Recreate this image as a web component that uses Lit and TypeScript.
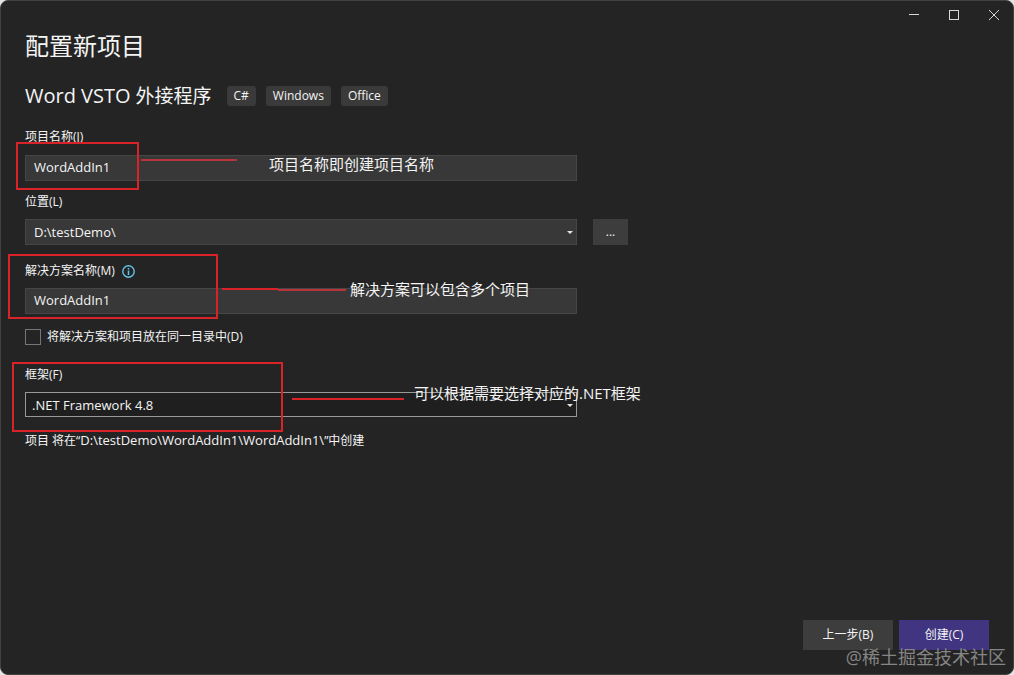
import { LitElement, html, css, svg } from "lit";
import { customElement, property, state } from "lit/decorators.js";

@customElement("window-controls")
class WindowControls extends LitElement {
  static styles = css`
    :host {
      display: flex;
      justify-content: flex-end;
      height: 28px;
    }
    .control {
      width: 40px;
      padding: 0;
      border: 0;
      background: none;
      color: #d8d8d8;
      display: grid;
      place-items: center;
    }
    .icon {
      display: block;
    }
  `;

  private icon(shape: unknown) {
    return html`<svg class="icon" width="12" height="12" viewBox="0 0 12 12" fill="none" stroke="currentColor" aria-hidden="true">${shape}</svg>`;
  }

  render() {
    return html`
      <button class="control" aria-label="最小化">${this.icon(svg`<path d="M2 5.5H12" />`)}</button>
      <button class="control" aria-label="最大化">${this.icon(svg`<rect x="2.5" y="1.5" width="9" height="9" />`)}</button>
      <button class="control" aria-label="关闭">${this.icon(svg`<path d="M2 1L12 11M12 1L2 11" />`)}</button>
    `;
  }
}

@customElement("callout-note")
class CalloutNote extends LitElement {
  @property() text = "";

  static styles = css`
    :host {
      position: absolute;
      pointer-events: none;
      color: #f4f4f4;
      font-size: 15px;
      line-height: 20px;
      white-space: nowrap;
    }
  `;

  render() {
    return html`${this.text}`;
  }
}

@customElement("app-root")
class AppRoot extends LitElement {
  @state() private projectName = "WordAddIn1";
  @state() private solutionName = "WordAddIn1";
  @state() private location = "D:\\testDemo\\";

  static styles = css`
    :host {
      display: block;
      background: #e4e4e4;
      font-family: "Open Sans", "Noto Sans CJK SC", sans-serif;
      font-size: 12px;
      line-height: 18px;
      color: #f4f4f4;
    }
    * {
      box-sizing: border-box;
    }
    .window {
      position: relative;
      min-height: 100vh;
      display: flex;
      flex-direction: column;
      background: #242424;
      border: 1px solid #414141;
      border-radius: 8px;
    }
    .content {
      flex: 1;
      padding: 0 24px;
    }
    .title {
      margin: 0;
      font-size: 24px;
      line-height: 34px;
      font-weight: 400;
    }
    .template {
      display: flex;
      align-items: center;
      margin-top: 18px;
      gap: 15px;
    }
    .subtitle {
      margin: 0;
      font-size: 19px;
      line-height: 30px;
      font-weight: 400;
    }
    .product {
      font-size: 20px;
    }
    .tags {
      display: flex;
      gap: 10px;
      margin: 0;
      padding: 0;
      list-style: none;
    }
    .tag {
      padding: 1px 7px;
      border-radius: 3px;
      background: #3a3a3a;
    }
    .form {
      margin-top: 17px;
      display: flex;
      flex-direction: column;
    }
    .label {
      display: flex;
      align-items: center;
      gap: 7px;
    }
    .group {
      display: flex;
      flex-direction: column;
      gap: 8px;
      margin-bottom: 14px;
    }
    .group.first {
      gap: 9px;
      margin-bottom: 12px;
    }
    .group.wide {
      margin-bottom: 17px;
    }
    .row {
      display: flex;
      gap: 16px;
    }
    .field {
      flex: 0 1 552px;
      position: relative;
    }
    .box {
      display: block;
      width: 100%;
      height: 26px;
      margin: 0;
      padding: 0 8px;
      border: 1px solid #464646;
      border-radius: 0;
      background: #383838;
      color: #f4f4f4;
      font: inherit;
      font-size: 13px;
      appearance: none;
      outline: none;
    }
    .box.text {
      padding-bottom: 2px;
    }
    .box.outlined {
      height: 25px;
      padding: 0 6px;
      border-color: #999;
      background: #1f1f1f;
    }
    .arrow {
      position: absolute;
      right: 4px;
      top: 12px;
      pointer-events: none;
    }
    .browse {
      width: 35px;
      height: 26px;
      padding: 0;
      border: 0;
      background: #3d3d3d;
      color: #f4f4f4;
      font: inherit;
    }
    .check {
      display: flex;
      align-items: center;
      gap: 6px;
      margin-bottom: 20px;
    }
    .tick {
      appearance: none;
      width: 16px;
      height: 16px;
      margin: 0;
      border: 1px solid #767676;
      background: #242424;
    }
    .tick:checked {
      background: #6a5acd;
    }
    .result {
      margin: 0;
    }
    .path {
      font-size: 13px;
    }
    .actions {
      display: flex;
      justify-content: flex-end;
      gap: 6px;
      padding: 0 24px 24px;
    }
    .action {
      width: 90px;
      height: 30px;
      padding: 0;
      border: 0;
      background: #3d3d3d;
      color: #f4f4f4;
      font: inherit;
    }
    .action.primary {
      background: #413480;
    }
    .marks {
      position: absolute;
      left: -1px;
      top: -1px;
      pointer-events: none;
    }
    .note-project {
      left: 268px;
      top: 153px;
    }
    .note-solution {
      left: 349px;
      top: 278px;
    }
    .note-framework {
      left: 413px;
      top: 382px;
    }
    .watermark {
      position: absolute;
      right: 7px;
      bottom: 4px;
      font-size: 18px;
      line-height: 26px;
      color: #858585;
      pointer-events: none;
    }
  `;

  private arrow() {
    return html`<svg class="arrow" width="6" height="3" viewBox="0 0 6 3" aria-hidden="true"><path d="M0 0H6L3 3Z" fill="#e4e4e4" /></svg>`;
  }

  render() {
    return html`
      <div class="window">
        <window-controls></window-controls>
        <main class="content">
          <h1 class="title">配置新项目</h1>
          <div class="template">
            <h2 class="subtitle"><span class="product">Word VSTO</span> 外接程序</h2>
            <ul class="tags">
              ${["C#", "Windows", "Office"].map((t) => html`<li class="tag">${t}</li>`)}
            </ul>
          </div>
          <form class="form" @submit=${(e: Event) => e.preventDefault()}>
            <div class="group first">
              <label class="label" for="project">项目名称(J)</label>
              <div class="row">
                <div class="field">
                  <input class="box text" id="project" .value=${this.projectName}
                    @input=${(e: Event) => (this.projectName = (e.target as HTMLInputElement).value)} />
                </div>
              </div>
            </div>
            <div class="group wide">
              <label class="label" for="location">位置(L)</label>
              <div class="row">
                <div class="field">
                  <select class="box" id="location"><option>${this.location}</option></select>
                  ${this.arrow()}
                </div>
                <button class="browse" type="button" aria-label="浏览">...</button>
              </div>
            </div>
            <div class="group">
              <label class="label" for="solution">解决方案名称(M)
                <svg width="13" height="13" viewBox="0 0 13 13" fill="none" stroke="#62c4e8" aria-hidden="true">
                  <circle cx="6.5" cy="6.5" r="5.7" stroke-width="1.4" />
                  <path d="M6.5 5.6V10M6.5 3V4.4" stroke-width="1.5" />
                </svg>
              </label>
              <div class="row">
                <div class="field">
                  <input class="box text" id="solution" .value=${this.solutionName}
                    @input=${(e: Event) => (this.solutionName = (e.target as HTMLInputElement).value)} />
                </div>
              </div>
            </div>
            <label class="check"><input class="tick" type="checkbox" />将解决方案和项目放在同一目录中(D)</label>
            <div class="group">
              <label class="label" for="framework">框架(F)</label>
              <div class="row">
                <div class="field">
                  <select class="box outlined" id="framework"><option>.NET Framework 4.8</option></select>
                  ${this.arrow()}
                </div>
              </div>
            </div>
            <p class="result">项目 将在“<span class="path">${this.location}${this.solutionName}\\${this.projectName}\\</span>”中创建</p>
          </form>
        </main>
        <footer class="actions">
          <button class="action">上一步(B)</button>
          <button class="action primary">创建(C)</button>
        </footer>
        <svg class="marks" width="700" height="450" fill="none" stroke="#da2329" stroke-width="2" aria-hidden="true">
          <rect x="17" y="143" width="121" height="46" />
          <rect x="9" y="255" width="208" height="63" />
          <rect x="13" y="363" width="269" height="68" />
          <path d="M141 160H237" stroke="#b8343a" />
          <path d="M222 289H278M292 399H404" />
          <path d="M278 290H346" stroke="#b8343a" />
        </svg>
        <callout-note class="note-project" text="项目名称即创建项目名称"></callout-note>
        <callout-note class="note-solution" text="解决方案可以包含多个项目"></callout-note>
        <callout-note class="note-framework" text="可以根据需要选择对应的.NET框架"></callout-note>
        <div class="watermark">@稀土掘金技术社区</div>
      </div>
    `;
  }
}
